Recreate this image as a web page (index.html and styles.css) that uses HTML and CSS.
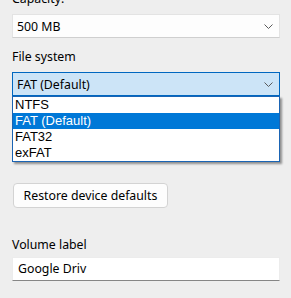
FILE: index.html
```html
<!DOCTYPE html>
<html lang="en">

<head>
    <meta charset="UTF-8">
    <meta name="viewport" content="width=device-width, initial-scale=1.0">
    <title>Format</title>
    <link rel="stylesheet" href="styles.css">
</head>

<body>
    <div class="panel">
        <p class="label">Capacity:</p>
        <div class="combo">
            <span>500 MB</span>
            <svg class="chevron" width="9" height="5" viewBox="0 0 9 5"><path d="M0.5 0.5 L4.5 4.5 L8.5 0.5" fill="none" stroke="#5a5a5a" stroke-width="1"/></svg>
        </div>

        <p class="label">File system</p>
        <div class="combo-wrap">
            <div class="combo open">
                <span>FAT (Default)</span>
                <svg class="chevron" width="9" height="5" viewBox="0 0 9 5"><path d="M0.5 0.5 L4.5 4.5 L8.5 0.5" fill="none" stroke="#5a5a5a" stroke-width="1"/></svg>
            </div>
            <ul class="dropdown">
                <li>NTFS</li>
                <li class="selected">FAT (Default)</li>
                <li>FAT32</li>
                <li>exFAT</li>
            </ul>
        </div>

        <button class="btn">Restore device defaults</button>

        <p class="label label-text">Volume label</p>
        <div class="textbox">Google Driv</div>
    </div>
</body>

</html>
```

FILE: styles.css
```css
* {
    box-sizing: border-box;
    margin: 0;
    padding: 0;
}

body {
    background: #eeeeee;
    font-family: "Noto Sans", "Open Sans", sans-serif;
    font-size: 12.3px;
    color: #000;
    overflow: hidden;
}

.panel {
    display: flex;
    flex-direction: column;
    align-items: flex-start;
    padding: 0 11px 0 12px;
    margin-top: -9px;
}

.label {
    height: 16px;
    line-height: 16px;
    margin-bottom: 7px;
}

.combo {
    width: 268px;
    height: 24px;
    display: flex;
    align-items: center;
    justify-content: space-between;
    padding: 0 6px 0 4px;
    background: #fdfdfd;
    border: 1px solid #e3e3e3;
    border-bottom-color: #cfcfcf;
    margin-bottom: 11px;
}

.combo-wrap {
    position: relative;
}

.combo-wrap .combo {
    margin-bottom: 0;
}

.combo.open {
    background: #cce4f7;
    border-color: #0067c0;
}

.chevron {
    display: block;
}

/* open list lies over the allocation size field */
.dropdown {
    position: absolute;
    top: 100%;
    left: 0;
    width: 268px;
    list-style: none;
    background: #fff;
    border: 1px solid #1a64b4;
    box-shadow: 2px 2px 2px rgba(0, 0, 0, 0.4);
    font-family: "Liberation Sans", Arial, sans-serif;
    font-size: 13px;
    z-index: 2;
}

.dropdown li {
    height: 16px;
    line-height: 16px;
    padding-left: 2px;
}

.dropdown li.selected {
    background: #0078d7;
    color: #fff;
}

.btn {
    margin-top: 87px;
    margin-left: 1px;
    width: 155px;
    height: 25px;
    background: #fdfdfd;
    border: 1px solid #d3d3d3;
    border-radius: 4px;
    font-family: inherit;
    font-size: inherit;
    color: #000;
}

.label-text {
    margin-top: 29px;
    margin-bottom: 4px;
}

.textbox {
    width: 268px;
    height: 24px;
    line-height: 22px;
    padding-left: 5px;
    background: #fff;
    border: 1px solid #ececec;
    border-bottom-color: #868686;
}
```
